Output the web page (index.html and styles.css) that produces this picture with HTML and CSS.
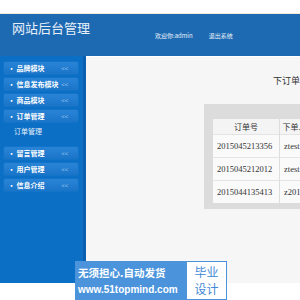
FILE: index.html
```html
<!DOCTYPE html>
<html>
<head>
<meta charset="utf-8">
<link rel="stylesheet" href="styles.css">
</head>
<body>
<div class="top"></div>
<div class="header">
  <div class="title">网站后台管理</div>
  <div class="user"><span>欢迎你:admin</span><span class="logout">退出系统</span></div>
</div>
<div class="main">
  <div class="sidebar">
    <div class="item"><span>· 品牌模块</span><span class="arr">&lt;&lt;</span></div>
    <div class="item"><span>· 信息发布模块</span><span class="arr">&lt;&lt;</span></div>
    <div class="item"><span>· 商品模块</span><span class="arr">&lt;&lt;</span></div>
    <div class="item"><span>· 订单管理</span><span class="arr">&lt;&lt;</span></div>
    <div class="sub">订单管理</div>
    <div class="item"><span>· 留言管理</span><span class="arr">&lt;&lt;</span></div>
    <div class="item"><span>· 用户管理</span><span class="arr">&lt;&lt;</span></div>
    <div class="item"><span>· 信息介绍</span><span class="arr">&lt;&lt;</span></div>
  </div>
  <div class="content">
    <div class="ptitle">下订单信息</div>
    <div class="box">
      <table class="tbl">
        <tr><th class="c1">订单号</th><th>下单人</th></tr>
        <tr><td class="c1">2015045213356</td><td>ztest</td></tr>
        <tr><td class="c1">2015045212012</td><td>ztest</td></tr>
        <tr><td class="c1">2015044135413</td><td>z2015</td></tr>
      </table>
    </div>
  </div>
</div>
<div class="wm">
  <div class="wm-l">
    <div class="l1">无须担心.自动发货</div>
    <div class="l2">www.51topmind.com</div>
  </div>
  <div class="wm-r"><div>毕业</div><div>设计</div></div>
</div>
</body>
</html>
```
FILE: styles.css
```css
html, body { margin: 0; padding: 0; background: #fff; overflow: hidden; width: 300px; height: 300px; }
body { font-family: "Noto Sans CJK SC", sans-serif; position: relative; }
.top { height: 13px; border-bottom: 1px solid #f4e8d6; background: #fff; }
.header { height: 42px; background: #1d6ab3; position: relative; display: flex; }
.title { color: #e8f0f8; font-size: 13px; line-height: 13px; padding: 7px 0 0 12px; width: 143px; }
.user { color: #e8f0f8; font-size: 6px; padding-top: 17px; display: flex; gap: 16px; }
.main { display: flex; height: 227px; }
.sidebar { width: 83px; background: #0b6fc6; border-right: 3px solid #0a5fae; padding-top: 6px; }
.item { margin: 0 5px 4px 4px; height: 12px; background: linear-gradient(#2a84d6, #1a74c8); border-radius: 2px; display: flex; justify-content: space-between; align-items: center; color: #fff; font-size: 7px; font-weight: bold; padding: 0 10px 0 4px; box-shadow: 0 0 1px #5aa0e0; }
.item .arr { font-weight: normal; color: #9cc6ee; font-size: 6px; }
.sub { color: #e6f0fa; font-size: 7px; height: 13px; line-height: 13px; padding-left: 14px; margin-bottom: 9px; margin-top: -1px; }
.content { flex: 1; background: #f6f6f6; overflow: hidden; border-top: 1px solid #fff; }
.ptitle { margin: 17px 0 0 187px; font-size: 9px; color: #333; white-space: nowrap; height: 14px; }
.box { margin: 16px 0 0 118px; background: #dcdcdc; padding: 15px 0 6px 9px; width: 200px; }
.tbl { border-collapse: collapse; background: #fafafa; font-family: "Liberation Serif", "Noto Sans CJK SC", serif; font-size: 8.5px; color: #333; white-space: nowrap; }
.tbl th { font-family: "Noto Sans CJK SC", sans-serif; font-weight: normal; font-size: 8px; height: 15px; text-align: center; background: #f4f4f4; border-right: 1px solid #ddd; padding: 0 2px; }
.tbl td { height: 22px; border-top: 1px solid #e4e4e4; border-right: 1px solid #ddd; padding: 0 4px; }
.tbl .c1 { width: 58px; }
.wm { position: absolute; left: 75px; top: 261px; width: 152px; height: 39px; display: flex; background: #4b94dc; }
.wm-l { width: 111px; color: #fff; font-weight: bold; padding-left: 3px; box-sizing: border-box; white-space: nowrap; }
.l1 { font-size: 10.5px; line-height: 13px; margin-top: 5px; }
.l2 { font-family: "Liberation Sans", sans-serif; font-size: 10px; line-height: 12px; margin-top: 5px; }
.wm-r { flex: 1; background: #fff; border: 1px solid #4b94dc; color: #3f8ad6; font-size: 12px; line-height: 17px; text-align: center; padding-top: 1px; }
```
